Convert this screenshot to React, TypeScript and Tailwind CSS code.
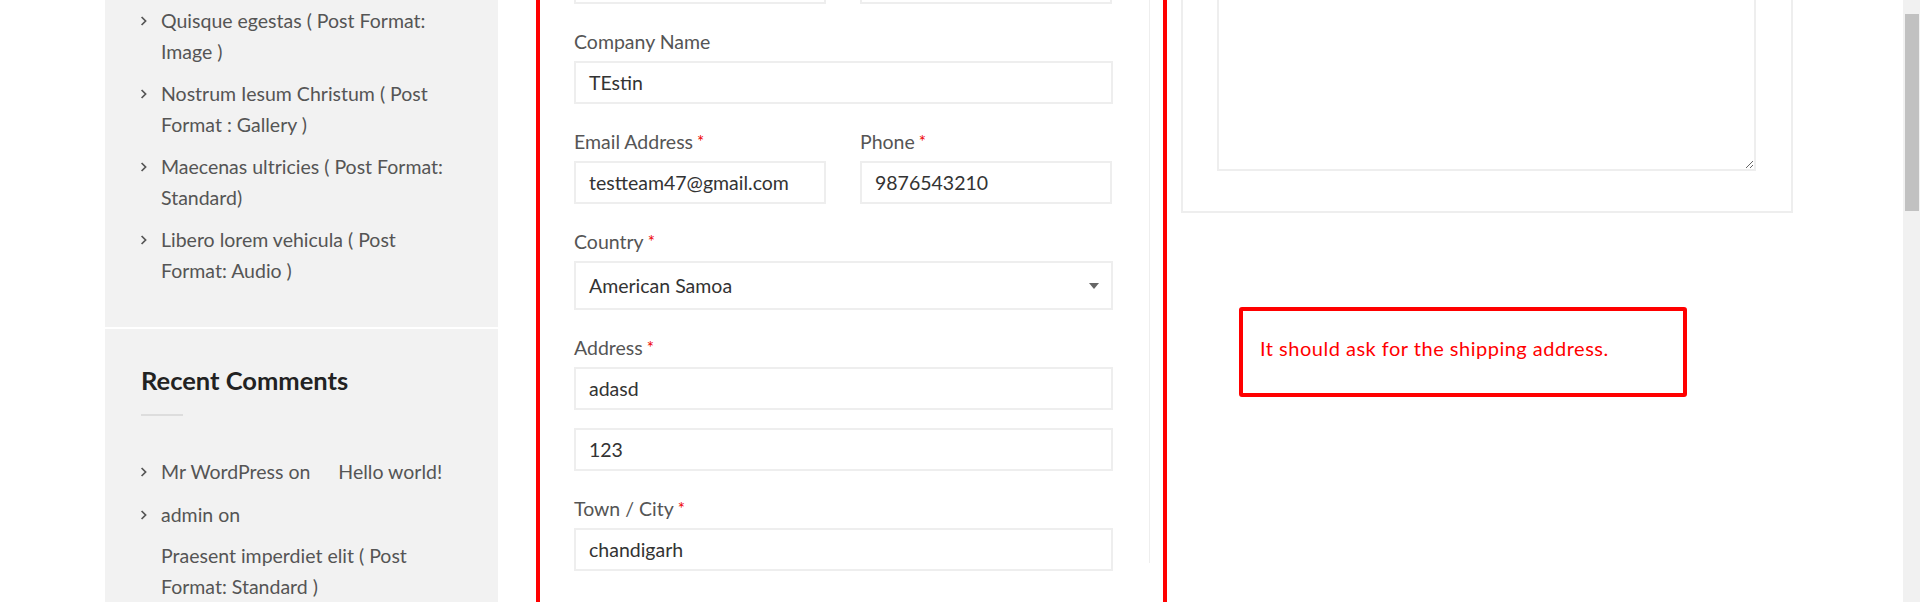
import React from "react";

const Chevron = () => (
  <svg width="8" height="12" viewBox="0 0 8 12" className="shrink-0 mt-[10px]">
    <path d="M1.6 2 L5.6 6 L1.6 10" fill="none" stroke="#555" strokeWidth="1.7" />
  </svg>
);

const Item = ({ children }: { children: React.ReactNode }) => (
  <li className="flex">
    <div className="w-[21px] shrink-0 -ml-[1px]">
      <Chevron />
    </div>
    <div className="flex-1 whitespace-nowrap">{children}</div>
  </li>
);

const Label = ({ text, req }: { text: string; req?: boolean }) => (
  <div className="text-[19.5px] leading-[26px] mb-[6px] text-[#555] whitespace-nowrap">
    {text}
    {req && <span className="ml-[4px] text-[17px] align-top text-[#ee0000]">*</span>}
  </div>
);

const Field = ({ value }: { value: string }) => (
  <div className="h-[43px] border-2 border-[#eeeeee] bg-white px-[13px] flex items-center text-[19.5px] text-[#333]">
    {value}
  </div>
);

export default function App() {
  return (
    <div className="w-[1920px] h-[602px] overflow-hidden bg-white flex font-[Lato,sans-serif]">
      <div className="w-[105px] shrink-0" />
      {/* Sidebar */}
      <aside className="w-[393px] shrink-0 flex flex-col text-[19.5px] leading-[31px] text-[#555]">
        <div className="bg-[#f2f2f2] px-[36px] pt-[5px] pb-[41px]">
          <ul className="flex flex-col gap-[11px]">
            <Item>
              Quisque egestas ( Post Format:
              <br />
              Image )
            </Item>
            <Item>
              Nostrum Iesum Christum ( Post
              <br />
              Format : Gallery )
            </Item>
            <Item>
              Maecenas ultricies ( Post Format:
              <br />
              Standard)
            </Item>
            <Item>
              Libero lorem vehicula ( Post
              <br />
              Format: Audio )
            </Item>
          </ul>
        </div>
        <div className="bg-[#f2f2f2] mt-[2px] flex-1 px-[36px] pt-[36px]">
          <h2 className="text-[25.5px] leading-[30px] font-bold text-[#222]">Recent Comments</h2>
          <div className="w-[42px] h-[2px] bg-[#dddddd] mt-[19px]" />
          <ul className="flex flex-col gap-[12px] mt-[40px]">
            <Item>
              <div className="flex gap-x-[28px]">
                <span>Mr WordPress on</span>
                <span>Hello world!</span>
              </div>
            </Item>
            <Item>
              <div className="flex flex-col gap-y-[10px]">
                <span>admin on</span>
                <span>
                  Praesent imperdiet elit ( Post
                  <br />
                  Format: Standard )
                </span>
              </div>
            </Item>
          </ul>
        </div>
      </aside>

      {/* Form column */}
      <div className="relative ml-[40px] w-[612px] shrink-0">
        <div className="h-full border-x border-[#eeeeee] pl-[35px] pr-[36px]">
          <div className="grid grid-cols-[252px_252px] gap-[34px] -mt-[39px]">
            <Field value="" />
            <Field value="" />
          </div>
          <div className="mt-[25px]">
            <Label text="Company Name" />
            <Field value="TEstin" />
          </div>
          <div className="mt-[25px] grid grid-cols-[252px_252px] gap-[34px]">
            <div>
              <Label text="Email Address" req />
              <Field value="testteam47@gmail.com" />
            </div>
            <div>
              <Label text="Phone" req />
              <Field value="9876543210" />
            </div>
          </div>
          <div className="mt-[25px]">
            <Label text="Country" req />
            <div className="h-[49px] border-2 border-[#eeeeee] bg-white pl-[13px] pr-[12px] flex items-center justify-between text-[19.5px] text-[#333]">
              <span>American Samoa</span>
              <svg width="10" height="6" viewBox="0 0 10 6">
                <path d="M0 0 L10 0 L5 6 Z" fill="#666" />
              </svg>
            </div>
          </div>
          <div className="mt-[25px]">
            <Label text="Address" req />
            <Field value="adasd" />
            <div className="mt-[18px]">
              <Field value="123" />
            </div>
          </div>
          <div className="mt-[25px]">
            <Label text="Town / City" req />
            <Field value="chandigarh" />
          </div>
          <div className="mt-[25px] grid grid-cols-[252px_252px] gap-[34px]">
            <Label text="State / County" req />
            <Label text="Postcode / ZIP" req />
          </div>
        </div>
        <div className="absolute -left-[2px] -top-[20px] -bottom-[20px] w-[631px] border-4 border-[#ff0000] pointer-events-none" />
      </div>

      {/* Right column */}
      <div className="ml-[31px] w-[612px] shrink-0 flex flex-col">
        <div className="-mt-[60px] border-2 border-[#eeeeee] pt-[34px] pl-[34px] pr-[35px] pb-[40px]">
          <textarea
            className="block w-full h-[195px] border-2 border-[#eeeeee] bg-white"
            readOnly
          />
        </div>
        <div className="mt-[94px] ml-[58px] w-[448px] h-[90px] border-4 border-[#ff0000] rounded-[3px] pl-[17px] pt-[25px]">
          <div className="text-[20px] leading-[25px] tracking-[0.5px] text-[#ff0000] whitespace-nowrap">
            It should ask for the shipping address.
          </div>
        </div>
      </div>

      <div className="flex-1" />
      {/* Scrollbar */}
      <div className="w-[17px] shrink-0 bg-[#f1f1f1] flex flex-col">
        <div className="mt-[14px] h-[197px] ml-[2px] mr-[1px] bg-[#c1c1c1]" />
      </div>
    </div>
  );
}
